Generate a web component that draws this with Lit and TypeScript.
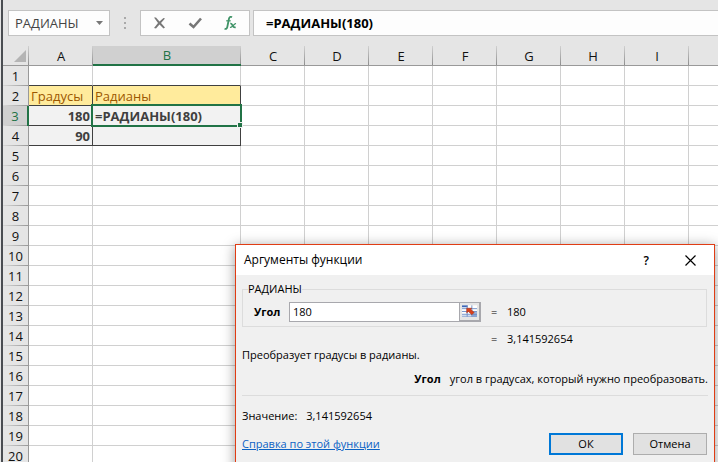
import { LitElement, html, css } from "lit";
import { customElement, state } from "lit/decorators.js";
import { classMap } from "lit/directives/class-map.js";

const COLUMNS = ["A", "B", "C", "D", "E", "F", "G", "H", "I", ""];
const ROWS = Array.from({ length: 20 }, (_, i) => i + 1);
const CELLS: Record<string, string> = {
  A2: "Градусы",
  B2: "Радианы",
  A3: "180",
  B3: "=РАДИАНЫ(180)",
  A4: "90",
};

@customElement("formula-bar")
class FormulaBar extends LitElement {
  static styles = css`
    :host {
      display: flex;
      align-items: center;
      padding: 10px 0 10px 5px;
      background: #e5e5e5;
    }
    .name,
    .tools,
    .formula {
      box-sizing: border-box;
      height: 26px;
      border: 1px solid #c3c3c3;
      background: #fdfdfd;
    }
    .name {
      display: grid;
      width: 102px;
      align-items: center;
    }
    .name > * {
      grid-area: 1 / 1;
    }
    select {
      appearance: none;
      width: 100%;
      height: 24px;
      border: 0;
      margin: 0;
      padding: 0 0 0 6px;
      background: none;
      font: 13px "Open Sans", "Noto Sans", sans-serif;
      color: #444;
    }
    .arrow {
      justify-self: end;
      margin-right: 6px;
      pointer-events: none;
    }
    .dots {
      display: grid;
      gap: 3px;
      margin: 0 14px;
    }
    .dots i {
      width: 2px;
      height: 2px;
      background: #a9a9a9;
    }
    .tools {
      display: flex;
      width: 110px;
      align-items: center;
      justify-content: space-between;
      padding: 0 12px;
      margin-right: 3px;
    }
    button {
      display: flex;
      padding: 0;
      border: 0;
      background: none;
    }
    .formula {
      flex: 1;
      min-width: 0;
      margin: 0;
      padding: 0 12px;
      border-right: 0;
      border-radius: 0;
      font: bold 13px "Open Sans", "Noto Sans", sans-serif;
      color: #000;
    }
  `;

  render() {
    return html`
      <div class="name">
        <select aria-label="Имя">
          <option>РАДИАНЫ</option>
        </select>
        <svg class="arrow" width="7" height="4" viewBox="0 0 7 4"><path d="M0 0h7L3.500 4z" fill="#777" /></svg>
      </div>
      <span class="dots"><i></i><i></i><i></i></span>
      <div class="tools">
        <button aria-label="Отмена">
          <svg width="13" height="12" viewBox="0 0 13 12">
            <path d="M1 .5 3 .5 6.500 4.500 10.500 1 12 1.500 8 6 12 10.500 10.500 11.500 6.500 7.500 3 11.500 1 11 5 6z" fill="#777" />
          </svg>
        </button>
        <button aria-label="Ввод">
          <svg width="15" height="12" viewBox="0 0 15 12">
            <path d="M1.500 6.500 5.500 10 13 1.500" fill="none" stroke="#777" stroke-width="2.600" />
          </svg>
        </button>
        <button aria-label="Вставить функцию">
          <svg width="13" height="14" viewBox="0 0 13 14" fill="none" stroke="#3f9367">
            <path d="M8 1.300C6.500.300 5.300 1 4.900 3L3.300 11C3 12.600 2 13.300.600 12.700" stroke-width="1.800" />
            <path d="M2.200 4.800h4.500" stroke-width="1.200" />
            <path d="M6.300 7.700C8.800 6.800 8.300 12.300 11.600 11.200" stroke-width="1.800" />
            <path d="M12 7.600C10 7 8.500 12 6 11.300" stroke-width="1.300" />
          </svg>
        </button>
      </div>
      <input class="formula" aria-label="Строка формул" .value=${CELLS.B3} />
    `;
  }
}

@customElement("sheet-grid")
class SheetGrid extends LitElement {
  static styles = css`
    :host {
      display: block;
      background: #fff;
    }
    table {
      width: 100%;
      table-layout: fixed;
      border-spacing: 0;
      font: 13px/18px "Open Sans", "Noto Sans", sans-serif;
    }
    th,
    td {
      box-sizing: border-box;
      height: 20px;
      padding: 0;
      border: 0 solid #d0d0d0;
      border-width: 0 1px 1px 0;
      overflow: hidden;
      white-space: nowrap;
      text-align: left;
      line-height: 18px;
    }
    th {
      font-weight: normal;
      text-align: center;
      color: #111;
    }
    .num {
      width: 26px;
    }
    .a,
    .c {
      width: 64px;
    }
    .b {
      width: 148px;
    }
    .rest {
      width: auto;
    }
    thead th {
      border-color: #999;
      border-right: 0;
      background: linear-gradient(#d0d0d0, #8e8e8e) right / 1px 100% no-repeat #e5e5e5;
    }
    thead th.rest {
      background: #e5e5e5;
    }
    td:last-child {
      border-right: 0;
    }
    tbody th {
      border-right-color: #999;
      border-bottom: 0;
      background: linear-gradient(90deg, #d8d8d8, #999) bottom / 100% 1px no-repeat #e5e5e5;
    }
    thead th.on {
      background-color: #d0d0d0;
      border-bottom: 2px solid #217346;
      color: #217346;
    }
    tbody th.on {
      background-color: #d0d0d0;
      border-right: 2px solid #217346;
      color: #217346;
    }
    .corner svg {
      display: block;
      margin: 4px 3px 3px auto;
    }
    .edge {
      border-bottom-color: #404040;
    }
    .box {
      border-color: #404040;
      background: #f2f2f2;
      color: #3f3f3f;
      font-weight: bold;
      padding: 0 2px;
    }
    .title {
      background: #ffeb9c;
      color: #9c5700;
      font-weight: normal;
    }
    .right {
      text-align: right;
    }
    .active {
      position: relative;
      overflow: visible;
    }
    .frame {
      position: absolute;
      inset: -2px;
      border: 2px solid #217346;
    }
    .frame::after {
      content: "";
      position: absolute;
      right: -3px;
      bottom: -3px;
      width: 4px;
      height: 4px;
      border: 1px solid #f2f2f2;
      background: #217346;
    }
  `;

  private cell(col: string, row: number) {
    const inTable = (col === "A" || col === "B") && row > 1 && row < 5;
    const active = col === "B" && row === 3;
    const classes = {
      edge: (col === "A" || col === "B") && row === 1,
      box: inTable,
      title: inTable && row === 2,
      right: col === "A" && row > 2,
      active,
    };
    return html`<td class=${classMap(classes)}>${CELLS[col + row] ?? ""}${active ? html`<span class="frame"></span>` : ""}</td>`;
  }

  render() {
    return html`
      <table>
        <thead>
          <tr>
            <th class="num corner">
              <svg width="12" height="12" viewBox="0 0 12 12"><path d="M12 0v12H0z" fill="#b4b4b4" /></svg>
            </th>
            ${COLUMNS.map(
              (c) => html`<th class=${classMap({ a: c === "A", b: c === "B", c: c > "B", rest: c === "", on: c === "B" })}>${c}</th>`
            )}
          </tr>
        </thead>
        <tbody>
          ${ROWS.map(
            (r) => html`<tr>
              <th class=${classMap({ on: r === 3 })}>${r}</th>
              ${COLUMNS.map((c) => this.cell(c, r))}
            </tr>`
          )}
        </tbody>
      </table>
    `;
  }
}

@customElement("arguments-dialog")
class ArgumentsDialog extends LitElement {
  @state() private value = "180";

  static styles = css`
    :host {
      display: block;
      box-sizing: border-box;
      border: 1px solid #e03c14;
      background: #f0f0f0;
      box-shadow: 0 2px 12px rgba(0, 0, 0, 0.4);
      font: 11px/16px "Open Sans", "Noto Sans", sans-serif;
      color: #000;
    }
    header {
      display: flex;
      align-items: center;
      height: 30px;
      padding: 0 18px 0 8px;
      background: #fff;
    }
    h2 {
      flex: 1;
      margin: 0;
      font-size: 12px;
      font-weight: normal;
    }
    header button {
      display: flex;
      padding: 0;
      border: 0;
      background: none;
      font: 600 12px "Open Sans", "Noto Sans", sans-serif;
    }
    .close {
      margin-left: 36px;
    }
    .body {
      padding: 6px 6px 20px;
    }
    fieldset {
      display: flex;
      align-items: center;
      min-width: 0;
      height: 46px;
      box-sizing: border-box;
      margin: 0 1px 0 0;
      padding: 0 0 0 11px;
      border: 1px solid #dcdcdc;
    }
    legend {
      margin-left: -6px;
      padding: 0;
    }
    label {
      width: 35px;
      font-weight: bold;
    }
    .ref {
      display: flex;
      width: 192px;
      height: 20px;
    }
    .ref input {
      box-sizing: border-box;
      flex: 1;
      min-width: 0;
      margin: 0;
      padding: 1px 3px 0;
      border: 1px solid #a8a8ad;
      border-right: 0;
      font: inherit;
    }
    .ref button {
      display: flex;
      box-sizing: border-box;
      width: 22px;
      padding: 1px 2px;
      border: 2px solid #a8a8ad;
      border-width: 1px 2px 2px 1px;
      background: #e6e6e6;
    }
    .eq {
      width: 16px;
      margin-left: 10px;
    }
    .result {
      display: flex;
      padding: 4px 0 0 239px;
    }
    p {
      margin: 0;
    }
    .hint {
      padding: 8px 0;
      text-align: right;
    }
    .hint b {
      margin-right: 9px;
    }
    hr {
      margin: 0 0 12px;
      border: 0;
      border-top: 1px solid #dcdcdc;
    }
    .value span {
      margin-left: 6px;
    }
    footer {
      display: flex;
      align-items: center;
      gap: 10px;
      padding: 9px 1px 0 0;
    }
    a {
      margin-right: auto;
      color: #0b62c4;
    }
    footer button {
      width: 74px;
      height: 22px;
      padding: 0;
      border: 1px solid #adadad;
      background: #e1e1e1;
      font: inherit;
    }
    footer .ok {
      border: 2px solid #0078d7;
    }
  `;

  render() {
    return html`
      <header>
        <h2>Аргументы функции</h2>
        <button aria-label="Справка">?</button>
        <button class="close" aria-label="Закрыть">
          <svg width="11" height="11" viewBox="0 0 11 11"><path d="M.5.500l10 10M10.500.500l-10 10" stroke="#000" stroke-width="1.200" /></svg>
        </button>
      </header>
      <div class="body">
        <fieldset>
          <legend>РАДИАНЫ</legend>
          <label for="angle">Угол</label>
          <div class="ref">
            <input id="angle" .value=${this.value} @input=${(e: Event) => (this.value = (e.target as HTMLInputElement).value)} />
            <button aria-label="Выбрать диапазон">
              <svg width="16" height="14" viewBox="0 0 16 14">
                <path d="M0 1h16v12H0z" fill="#fff" />
                <path d="M0 1h6v2H0z" fill="#3c65b5" />
                <path d="M0 4.500h16M0 7.500h16M0 10.500h16M0 12.500h16M5.500 1v12M10.500 1v12" stroke="#6f8fc8" />
                <path d="M11 8h5v5h-5z" fill="#5f82c2" opacity=".6" />
                <path d="M5 4h5.500L9.300 5.200l3.700 3.300-2.500 2.500-3.700-3.500L5 9z" fill="#d8401c" stroke="#a82a10" stroke-width=".5" />
              </svg>
            </button>
          </div>
          <span class="eq">=</span><span>${this.value}</span>
        </fieldset>
        <div class="result"><span class="eq">=</span><span>3,141592654</span></div>
        <p>Преобразует градусы в радианы.</p>
        <p class="hint"><b>Угол</b>угол в градусах, который нужно преобразовать.</p>
        <hr />
        <p class="value">Значение: <span>3,141592654</span></p>
        <footer>
          <a href="#help">Справка по этой функции</a>
          <button class="ok">ОК</button>
          <button>Отмена</button>
        </footer>
      </div>
    `;
  }
}

@customElement("app-root")
class AppRoot extends LitElement {
  static styles = css`
    :host {
      display: block;
      position: relative;
      box-sizing: border-box;
      height: 100vh;
      overflow: hidden;
      border-left: 1px solid #e5e5e5;
      background: #fff;
    }
    .window {
      border-left: 2px solid #4a4d52;
    }
    arguments-dialog {
      position: absolute;
      top: 244px;
      right: 3px;
      width: 480px;
    }
  `;

  render() {
    return html`
      <div class="window">
        <formula-bar></formula-bar>
        <sheet-grid></sheet-grid>
      </div>
      <arguments-dialog role="dialog" aria-label="Аргументы функции"></arguments-dialog>
    `;
  }
}
